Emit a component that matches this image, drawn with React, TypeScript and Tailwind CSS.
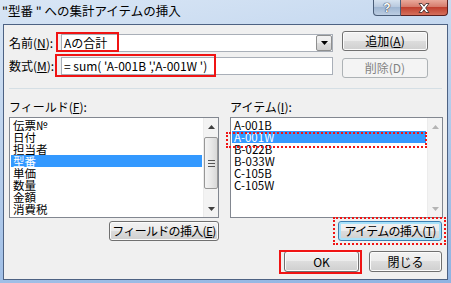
import React from "react";

const F = "font-['Noto_Sans_CJK_JP','Liberation_Sans',sans-serif]";

type BtnProps = {
  children: React.ReactNode;
  w: string;
  h?: string;
  variant?: "normal" | "focus" | "disabled";
  tight?: boolean;
};

function Btn({ children, w, h = "h-[20px]", variant = "normal", tight }: BtnProps) {
  const v =
    variant === "disabled"
      ? "border-[#adb2b5] bg-[#f4f4f4] text-[#838383]"
      : variant === "focus"
      ? "border-[#3c7fb1] bg-[linear-gradient(#f2f2f2,#ebebeb_50%,#dddddd_50%,#cfcfcf)] shadow-[inset_0_0_0_2px_#a8e2fb] text-black"
      : "border-[#707070] bg-[linear-gradient(#f2f2f2,#ebebeb_50%,#dddddd_50%,#cfcfcf)] shadow-[inset_0_0_0_1px_#fbfbfb] text-black";
  return (
    <div
      className={`${w} ${h} ${v} ${tight ? "tracking-[-0.7px]" : ""} border rounded-[3px] flex items-center justify-center whitespace-nowrap text-[12px] leading-[12px] ${F}`}
    >
      {children}
    </div>
  );
}

function ScrollBar({ thumb, disabled }: { thumb?: boolean; disabled?: boolean }) {
  const arrow = disabled ? "#b4b4b4" : "#3f3f3f";
  return (
    <div className="w-[15px] h-full flex flex-col bg-[#f3f3f3] border-l border-[#ececec]">
      <div className="h-[17px] flex items-center justify-center">
        <svg width="7" height="4" viewBox="0 0 7 4">
          <path d="M0 4 L3.5 0 L7 4Z" fill={arrow} />
        </svg>
      </div>
      {thumb && (
        <div className="mt-[2px] h-[52px] border border-[#979797] rounded-[2px] bg-[linear-gradient(90deg,#f4f4f4,#e8e8e8_50%,#d8d8d8)] flex flex-col items-center justify-center gap-[2px]">
          <div className="w-[7px] h-[1px] bg-[#555]" />
          <div className="w-[7px] h-[1px] bg-[#555]" />
          <div className="w-[7px] h-[1px] bg-[#555]" />
        </div>
      )}
      <div className="flex-1" />
      <div className="h-[17px] flex items-center justify-center">
        <svg width="7" height="4" viewBox="0 0 7 4">
          <path d="M0 0 L3.5 4 L7 0Z" fill={arrow} />
        </svg>
      </div>
    </div>
  );
}

const fields = ["伝票№", "日付", "担当者", "型番", "単価", "数量", "金額", "消費税"];
const items = ["A-001B", "A-001W", "B-022B", "B-033W", "C-105B", "C-105W"];

function ListBox({
  rows,
  selected,
  w,
  thumb,
  disabled,
}: {
  rows: string[];
  selected: number;
  w: string;
  thumb?: boolean;
  disabled?: boolean;
}) {
  return (
    <div className={`${w} h-[101px] border border-[#828790] bg-white flex`}>
      <div className="flex-1 pt-[1px]">
        {rows.map((r, i) => (
          <div
            key={r}
            className={`mx-[1px] pl-[2px] h-[12px] text-[11.5px] leading-[12px] whitespace-nowrap ${F} ${
              i === selected ? "bg-[#3399ff] text-white" : "text-black"
            }`}
          >
            {r}
          </div>
        ))}
      </div>
      <ScrollBar thumb={thumb} disabled={disabled} />
    </div>
  );
}

export default function App() {
  return (
    <div className="relative w-[451px] h-[283px] overflow-hidden bg-[linear-gradient(170deg,#d9e6f5,#bcd2ed_40%,#8fb3e2)] flex flex-col">
      {/* title bar */}
      <div className="h-[24px] flex items-start shrink-0">
        <div className={`pl-[2px] pt-[3px] text-[12.5px] leading-[16px] text-black ${F} whitespace-nowrap`}>
          "型番 " への集計アイテムの挿入
        </div>
        <div className="ml-auto mr-[3px] flex">
          <div className="w-[28px] h-[16px] border border-[#4a5d78] border-t-0 rounded-bl-[4px] bg-[linear-gradient(#d6e2f0,#b5c7dd_50%,#9fb6d2_50%,#bccde2)] flex items-center justify-center">
            <span className="text-white font-bold text-[12px] leading-[12px] [text-shadow:0_0_1px_#223,0_0_1px_#223] font-['Liberation_Sans',sans-serif]">
              ?
            </span>
          </div>
          <div className="w-[47px] h-[16px] border border-[#5a2020] border-t-0 border-l-0 rounded-br-[4px] bg-[linear-gradient(#e9a99b,#d47767_50%,#c0402f_50%,#d5705c)] flex items-center justify-center">
            <svg width="12" height="10" viewBox="0 0 12 10">
              <path
                d="M1 0.5 L4 0.5 L6 3.2 L8 0.5 L11 0.5 L7.6 5 L11 9.5 L8 9.5 L6 6.8 L4 9.5 L1 9.5 L4.4 5 Z"
                fill="#fff"
                stroke="#3a2a2a"
                strokeWidth="0.8"
              />
            </svg>
          </div>
        </div>
      </div>

      {/* client area */}
      <div className="ml-[3px] w-[445px] h-[256px] border border-[#4d6283] bg-[#f0f0f0] flex flex-col">
        {/* top section */}
        <div className="flex pt-[6px] pl-[5px]">
          <div className="flex flex-col">
            <div className="mt-[3px] h-[18px] flex items-center">
              <div className={`w-[52px] text-[12px] leading-[12px] whitespace-nowrap ${F}`}>
                名前(<span className="underline">N</span>):
              </div>
              <div className="w-[272px] h-[18px] border border-[#a9afb8] bg-white flex items-center">
                <div className={`flex-1 pl-[2px] text-[12px] leading-[12px] ${F}`}>Aの合計</div>
                <div className="w-[16px] h-[16px] border border-[#8e8f8f] rounded-[2px] bg-[linear-gradient(#f2f2f2,#ebebeb_50%,#dddddd_50%,#cfcfcf)] flex items-center justify-center">
                  <svg width="7" height="4" viewBox="0 0 7 4">
                    <path d="M0 0 L3.5 4 L7 0Z" fill="#000" />
                  </svg>
                </div>
              </div>
            </div>
            <div className="mt-[5px] h-[18px] flex items-center">
              <div className={`w-[52px] text-[12px] leading-[12px] whitespace-nowrap ${F}`}>
                数式(<span className="underline">M</span>):
              </div>
              <div className="w-[272px] h-[18px] border border-[#a9afb8] bg-white flex items-center">
                <div className={`pl-[2px] text-[12px] leading-[12px] whitespace-nowrap ${F}`}>
                  = sum( 'A-001B ','A-001W ')
                </div>
              </div>
            </div>
          </div>
          <div className="ml-[9px] flex flex-col gap-[7px]">
            <Btn w="w-[86px]">
              追加(<span className="underline">A</span>)
            </Btn>
            <Btn w="w-[86px]" variant="disabled">
              削除(D)
            </Btn>
          </div>
        </div>

        {/* separator */}
        <div className="mt-[10px] mx-[5px] h-[1px] bg-[#d5dfe5]" />

        {/* lists */}
        <div className="flex px-[5px] gap-[11px]">
          <div className="flex flex-col">
            <div className={`mt-[12px] h-[12px] text-[12px] leading-[12px] whitespace-nowrap ${F}`}>
              フィールド(<span className="underline">F</span>):
            </div>
            <div className="mt-[4px]">
              <ListBox rows={fields} selected={3} w="w-[210px]" thumb />
            </div>
            <div className="mt-[3px] flex justify-end">
              <Btn w="w-[110px]" tight>
                フィールドの挿入(<span className="underline">E</span>)
              </Btn>
            </div>
          </div>
          <div className="flex flex-col">
            <div className={`mt-[12px] h-[12px] text-[12px] leading-[12px] whitespace-nowrap ${F}`}>
              アイテム(<span className="underline">I</span>):
            </div>
            <div className="mt-[4px]">
              <ListBox rows={items} selected={1} w="w-[213px]" disabled />
            </div>
            <div className="mt-[3px] flex justify-end pr-[1px]">
              <Btn w="w-[104px]" variant="focus" tight>
                アイテムの挿入(<span className="underline">T</span>)
              </Btn>
            </div>
          </div>
        </div>

        {/* bottom buttons */}
        <div className="mt-[10px] flex justify-end gap-[10px] pr-[5px]">
          <Btn w="w-[75px]" h="h-[21px]">
            OK
          </Btn>
          <Btn w="w-[73px]" h="h-[21px]">
            閉じる
          </Btn>
        </div>
      </div>

      {/* red annotation overlays */}
      <div className="absolute left-[56px] top-[32px] w-[63px] h-[20px] border-2 border-[#f01414]" />
      <div className="absolute left-[55px] top-[54px] w-[161px] h-[23px] border-2 border-[#f01414]" />
      <div className="absolute left-[226px] top-[132px] w-[201px] h-[16px] border-2 border-dotted border-[#f01414]" />
      <div className="absolute left-[333px] top-[217px] w-[113px] h-[28px] border-2 border-dotted border-[#f01414]" />
      <div className="absolute left-[279px] top-[250px] w-[83px] h-[24px] border-2 border-[#f01414]" />
    </div>
  );
}
